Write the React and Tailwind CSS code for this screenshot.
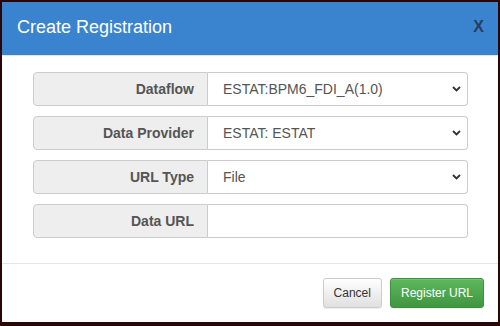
import React from "react";

function Chevron() {
  return (
    <svg width="9" height="6" viewBox="0 0 9 6" className="shrink-0">
      <path d="M1 1 L4.5 4.5 L8 1" fill="none" stroke="#333" strokeWidth="1.8" />
    </svg>
  );
}

function Row({ label, value, select }) {
  return (
    <div className="flex h-[34px]">
      <div className="w-[175px] shrink-0 flex items-center justify-end pr-[13px] bg-[#eeeeee] border border-[#cccccc] rounded-l-[4px] text-[14px] font-bold text-[#555555]">
        {label}
      </div>
      <div className="flex-1 flex items-center justify-between pl-[15px] pr-[6px] bg-white border border-l-0 border-[#cccccc] rounded-r-[4px] text-[14px] text-[#555555]">
        <span>{value}</span>
        {select && <Chevron />}
      </div>
    </div>
  );
}

export default function App() {
  return (
    <div
      className="w-[500px] h-[326px] bg-[#2a0606] pt-[2px] px-[2px] pb-[4px]"
      style={{ fontFamily: '"Liberation Sans", Arial, sans-serif' }}
    >
      <div className="w-full h-full bg-white flex flex-col">
        <div className="h-[54px] bg-[#3a84cf] border-b border-[#e5e5e5] flex items-center justify-between pl-[15px] pr-[14px] pb-[3px]">
          <span className="text-[18px] leading-none text-white">Create Registration</span>
          <span className="text-[16px] leading-none font-bold text-[#263f5c]">X</span>
        </div>
        <div className="flex flex-col gap-[10px] pt-[16px] pl-[31px] pr-[30px] h-[207px]">
          <Row label="Dataflow" value="ESTAT:BPM6_FDI_A(1.0)" select />
          <Row label="Data Provider" value="ESTAT: ESTAT" select />
          <Row label="URL Type" value="File" select />
          <Row label="Data URL" value="" />
        </div>
        <div className="flex-1 border-t border-[#e5e5e5] flex items-center justify-end gap-[8px] pr-[14px]">
          <button className="h-[30px] px-[10px] rounded-[3px] border border-[#cccccc] bg-gradient-to-b from-white to-[#e0e0e0] text-[12px] text-[#333333] shadow-[inset_0_1px_0_rgba(255,255,255,0.15),0_1px_1px_rgba(0,0,0,0.075)]">
            Cancel
          </button>
          <button className="h-[30px] px-[10px] rounded-[3px] border border-[#3e8f3e] bg-gradient-to-b from-[#5cb85c] to-[#419641] text-[12px] text-white shadow-[inset_0_1px_0_rgba(255,255,255,0.15),0_1px_1px_rgba(0,0,0,0.075)]">
            Register URL
          </button>
        </div>
      </div>
    </div>
  );
}
